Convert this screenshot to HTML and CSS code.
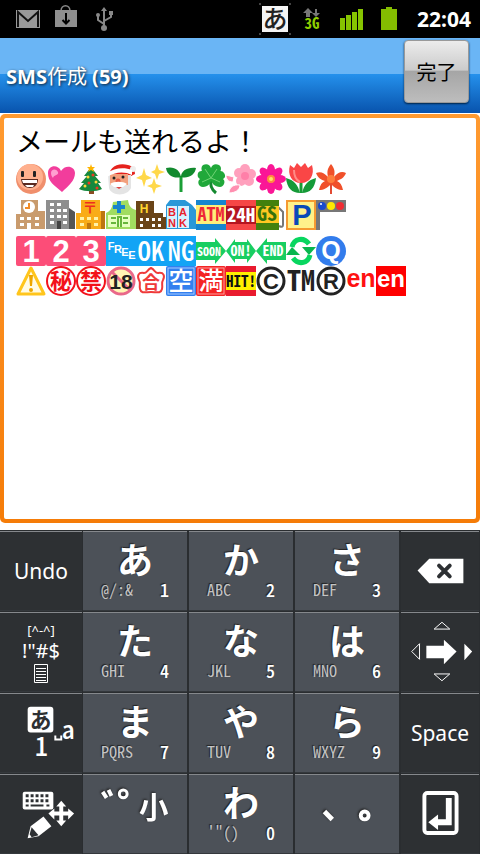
FILE: index.html
```html
<!DOCTYPE html>
<html lang="ja">
<head>
  <meta charset="UTF-8">
  <meta name="viewport" content="width=device-width, initial-scale=1.0">
  <title>SMS作成</title>
  <link rel="stylesheet" href="styles.css">
</head>
<body>

<div class="statusbar">
  <div class="status-icons">
    <svg class="slot" viewBox="0 0 38 38"><rect x="7" y="10" width="24" height="18" fill="#999"/><path d="M9 27V12l10 9 10-9v15" fill="none" stroke="#111" stroke-width="2"/></svg>
    <svg class="slot" viewBox="0 0 38 38"><path d="M14 11c0-7 9-7 9 0" fill="none" stroke="#888" stroke-width="1.5"/><rect x="8" y="10" width="22" height="17" fill="#8f8f8f"/><path d="M19 13v9M15.500 20l3.500 3.500 3.500-3.500" fill="none" stroke="#000" stroke-width="2"/></svg>
    <svg class="slot" viewBox="0 0 38 38"><path d="M19 27V9M19 24l-6-4v-4M19 21l7-4v-4" fill="none" stroke="#888" stroke-width="2"/><path d="M16 11l3-4 3 4z" fill="#888"/><circle cx="19" cy="28" r="3" fill="#888"/><circle cx="13" cy="15" r="2" fill="#888"/><rect x="24" y="11" width="4" height="4" fill="#888"/></svg>
  </div>
  <div class="status-icons">
    <svg class="slot" viewBox="0 0 38 38"><path d="M3 3h2v2H3zM33 3h2v2h-2zM3 33h2v2H3zM33 33h2v2h-2z" fill="#444"/><rect x="6" y="6" width="26" height="26" fill="#f4f4f4"/><text class="cjk medium" x="19" y="28" font-size="25" fill="#222">あ</text></svg>
    <svg class="slot" viewBox="0 0 38 38"><path d="M14 8l5 5h-3v4h-4v-4H9zM22 17l-4-4h3V9h2v4h3z" fill="#777"/><text class="half" x="18" y="29" font-size="15" fill="#8fcf00">3G</text></svg>
    <svg class="slot" viewBox="0 0 38 38"><path d="M8 18h5v12H8zM14 15h5v15h-5zM20 12h5v18h-5zM26 9h5v21h-5z" fill="#86c400"/></svg>
    <svg class="slot" viewBox="0 0 38 38"><path d="M11 9h5V7h6v2h5v21H11z" fill="#84bd00"/></svg>
    <span class="clock">22:04</span>
  </div>
</div>

<header class="titlebar">
  <h1>SMS<span>作成</span> (59)</h1>
  <button class="done" type="button">完了</button>
</header>

<main class="compose">
  <div class="message" contenteditable="true" role="textbox" aria-multiline="true" aria-label="本文" spellcheck="false">
    <p class="line">メールも送れるよ！</p>
    <div class="emoji-row">
      <svg viewBox="0 0 30 30"><circle cx="15" cy="15" r="15" fill="#f08f6c"/><circle cx="14" cy="13" r="13" fill="#ffb08e"/><rect x="5" y="7" width="3" height="6" rx="1" fill="#222"/><rect x="17" y="7" width="3" height="6" rx="1" fill="#222"/><path d="M5 15h17c0 12-16 12-17 0z" fill="#5a2a20"/><path d="M6 16h15v3H7z" fill="#fff"/><path d="M9 21h9l-1 2h-6z" fill="#fff"/></svg>
      <svg viewBox="0 0 30 30"><path d="M16 28C8 21 2 18 2 9c0-8 10-9 13-2 4-7 14-5 14 2 0 8-7 13-13 19z" fill="#f23d9c"/><path d="M5 9c0-4 5-5 7-1 1 4-4 2-5 6-1-1-2-3-2-5z" fill="#ff9fd0"/></svg>
      <svg viewBox="0 0 30 30"><path d="M13 25h5v5h-5z" fill="#8a4b22"/><path d="M15 3l7 9h-3l6 7h-3l4 6c-6 3-17 3-23 0l5-6H5l6-7H8z" fill="#15883d"/><path d="M15 0l1 3h3l-2 2 1 3-3-2-3 2 1-3-2-2h3z" fill="#ffb400"/><g fill="#ffd83a"><circle cx="12" cy="13" r="1.500"/><circle cx="20" cy="18" r="1.500"/><circle cx="9" cy="22" r="1.500"/></g><g fill="#ee3824"><circle cx="17" cy="11" r="1.500"/><circle cx="13" cy="19" r="1.500"/><circle cx="21" cy="24" r="1.500"/></g></svg>
      <svg viewBox="0 0 30 30"><path d="M3 14C2 5 10-2 22 1c5 1 7 5 7 9l-4 2z" fill="#e5221d"/><circle cx="27" cy="5" r="3" fill="#eee"/><path d="M2 11h23v13c-4 9-20 8-22 0z" fill="#e4e4e4"/><path d="M4 10h18v11H4z" fill="#f2a07d"/><path d="M1 9c7-5 17-6 25-3v5c-8-4-17-3-25 2z" fill="#fff"/><circle cx="8" cy="14" r="1.500" fill="#222"/><circle cx="17" cy="13" r="1.500" fill="#222"/><circle cx="12" cy="17" r="2.500" fill="#e65b45"/><path d="M4 20c4-3 13-3 17 0l-4 3H8z" fill="#fff"/><path d="M10 23h6l-3 2z" fill="#d44"/></svg>
      <svg viewBox="0 0 30 30" fill="#ffd84a"><path d="M8 4l2 7 6 3-6 2-2 7-2-7-6-2 6-3zM21 0l2 6 6 2-6 2-2 6-2-6-4-2 4-2zM18 14l2 6 6 2-6 2-2 6-2-6-5-2 5-2z"/></svg>
      <svg viewBox="0 0 30 30"><path d="M15 28V12" stroke="#1a9e36" stroke-width="3"/><path d="M15 13C9 15 1 12 0 4c8-2 14 2 15 9zM15 13c0-6 6-10 15-9-1 7-8 11-15 9z" fill="#128a2e"/></svg>
      <svg viewBox="0 0 30 30"><path d="M15 14c-1 7 0 11 5 15" fill="none" stroke="#14892f" stroke-width="3"/><g fill="#20a83a"><path d="M15 15C7 13 3 4 7 1c4-2 7 0 8 3 1-3 4-5 8-3 5 3 0 12-8 14z"/><path d="M14 14c5-7 12-9 14-5 2 3 1 5-1 6 3 2 1 8-3 8-5 0-9-4-10-9z"/><path d="M16 14C10 7 4 5 2 9c-1 3 0 5 2 6-3 2-2 8 3 8 5 0 8-4 9-9z"/></g><path d="M9 5l6 9 6-9M6 18l9-4 9 4" fill="none" stroke="#71d476"/></svg>
      <svg viewBox="0 0 30 30"><g fill="#ffa0bd"><circle cx="19" cy="5" r="5"/><circle cx="25" cy="10" r="5"/><circle cx="23" cy="17" r="5"/><circle cx="15" cy="17" r="5"/><circle cx="13" cy="9" r="5"/><circle cx="19" cy="12" r="5"/></g><path d="M0 11l8 2-1 5c-5 0-7-3-7-7zM3 29c0-6 5-9 11-8 0 5-5 8-11 8z" fill="#ff8fb0" stroke="#fff"/><circle cx="19" cy="12" r="4" fill="#ff7fa8"/></svg>
      <svg viewBox="0 0 30 30"><g fill="#fa1696"><ellipse cx="15" cy="6" rx="4" ry="6"/><ellipse cx="15" cy="24" rx="4" ry="6"/><g transform="rotate(45 15 15)"><ellipse cx="15" cy="6" rx="4" ry="6"/><ellipse cx="15" cy="24" rx="4" ry="6"/><ellipse cx="6" cy="15" rx="6" ry="4"/><ellipse cx="24" cy="15" rx="6" ry="4"/></g><ellipse cx="6" cy="15" rx="6" ry="4"/><ellipse cx="24" cy="15" rx="6" ry="4"/></g><circle cx="15" cy="15" r="4" fill="#ff8a3c"/><circle cx="15" cy="15" r="2" fill="#ffe36a"/></svg>
      <svg viewBox="0 0 30 30"><path d="M15 17v12" stroke="#169c35" stroke-width="3"/><path d="M14 29C6 29 1 24 0 14c8 2 12 7 14 15zM16 29c8 0 13-5 14-15-8 2-12 7-14 15z" fill="#159a38"/><path d="M4 1l4 3 3-5 4 4 4-4 3 5 4-3c3 10-2 18-11 18S1 11 4 1z" fill="#fa4646"/><path d="M8 6c0 6 2 10 6 12" fill="none" stroke="#ff8c86" stroke-width="2"/></svg>
      <svg viewBox="0 0 30 30"><path d="M15 20v10" stroke="#e24b34" stroke-width="2"/><path d="M15 0c4 5 4 8 3 13 4-5 8-6 12-4-2 5-5 6-9 8 3 1 5 4 6 9-5 0-8-2-12-6-4 4-7 6-12 6 1-5 3-8 6-9-4-1-7-3-9-8 5-2 8 0 12 4-1-5-1-8 3-13z" fill="#f0502a"/><circle cx="15" cy="15" r="4" fill="#ff7d3c"/></svg>
    </div>
    <div class="emoji-row">
      <svg viewBox="0 0 30 30"><path d="M0 14h5V0h17v11h7v18H0z" fill="#c99b6d"/><circle cx="13" cy="7" r="6" fill="#fff"/><path d="M13 3v5H9" fill="none" stroke="#f28c28" stroke-width="2"/><path d="M4 17h4v3H4zM11 17h4v3h-4zM19 17h4v3h-4zM4 23h4v3H4zM11 23h4v6h-4zM19 23h4v3h-4z" fill="#fff"/></svg>
      <svg viewBox="0 0 30 30"><path d="M0 0h23v29H0z" fill="#8e8e8e"/><path d="M23 8l6 4v17h-6z" fill="#555"/><path d="M4 3h4v3H4zM11 3h4v3h-4zM4 9h4v3H4zM11 9h4v3h-4zM17 9h4v3h-4zM4 15h4v3H4zM11 15h4v3h-4zM17 15h4v3h-4zM4 21h4v3H4zM17 21h4v3h-4z" fill="#fff"/><path d="M11 21h4v8h-4z" fill="#444"/></svg>
      <svg viewBox="0 0 30 30"><path d="M0 13h5V0h19v11h5v18H0z" fill="#f9ac18"/><text class="cjk bold" x="14" y="13" font-size="15" fill="#ef2c20">〒</text><path d="M4 17h4v3H4zM11 17h4v3h-4zM18 17h4v3h-4zM4 23h4v3H4zM18 23h4v3h-4z" fill="#fff2a8"/><path d="M11 23h4v6h-4zM25 11h4v18h-4z" fill="#bd7610"/></svg>
      <svg viewBox="0 0 30 30"><path d="M0 13c4-2 6-4 7-11l15-2c1 7 4 9 8 10v19H0z" fill="#a1dc60"/><path d="M2 15h22v12H2z" fill="#e6ffc0"/><path d="M13 1v12M7 7h12" stroke="#1884cc" stroke-width="4"/><path d="M5 18h5M17 18h5M5 23h5M17 23h5M12 27V17h3v10" fill="none" stroke="#67b63c" stroke-width="2"/></svg>
      <svg viewBox="0 0 30 30"><path d="M0 1h18v12h9v4h3v12H0z" fill="#6a4417"/><text class="latin" x="8" y="13" font-size="12" fill="#ffd52e">H</text><path d="M4 18h3v3H4zM10 18h3v3h-3zM16 18h3v3h-3zM22 18h3v3h-3zM4 24h3v3H4zM16 24h3v3h-3zM22 24h3v3h-3z" fill="#fff"/></svg>
      <svg viewBox="0 0 30 30"><path d="M0 5l4-5h15l7 5 4 5v19H0z" fill="#2998d8"/><path d="M1 6h10v22H1zM12 6h11v22H12z" fill="#d4f2ff"/><g class="latin" font-size="11" fill="#e91f2b"><text x="6" y="16">B</text><text x="17" y="16">A</text><text x="6" y="27">N</text><text x="17" y="27">K</text></g></svg>
      <svg viewBox="0 0 30 30"><path d="M0 0h30v30H0z" fill="#1685cf"/><path d="M0 5h30v19H0z" fill="#ffee7a"/><text class="half" x="15" y="21" font-size="18" fill="#ee2637">ATM</text></svg>
      <svg viewBox="0 0 30 30"><path d="M0 0h30v30H0z" fill="#f54646"/><path d="M0 6h30v18H0z" fill="#b51520"/><text class="half" x="15" y="22" font-size="19" fill="#fff">24H</text></svg>
      <svg viewBox="0 0 30 30"><path d="M22 7l5 5v13q0 3-4 1" fill="none" stroke="#777" stroke-width="2"/><path d="M0 0h23v30H0z" fill="#43810d"/><path d="M0 6h23v17H0z" fill="#ffc822"/><text class="half" x="11" y="21" font-size="20" fill="#37720a">GS</text></svg>
      <svg viewBox="0 0 30 30"><rect x="1" y="1" width="28" height="28" fill="#fff18a" stroke="#f59a31" stroke-width="2"/><text class="latin" x="16" y="25" font-size="29" fill="#0a49b8">P</text></svg>
      <svg viewBox="0 0 30 30"><path d="M0 0h30v12H4v18H0z" fill="#777"/><circle cx="6" cy="6" r="4" fill="#194bce"/><circle cx="15" cy="6" r="4" fill="#ffe900"/><circle cx="24" cy="6" r="4" fill="#f12c32"/><circle cx="5" cy="4" r="1" fill="#fff"/></svg>
    </div>
    <div class="emoji-row">
      <svg viewBox="0 0 30 30"><rect width="30" height="30" rx="2" fill="#fc4d78"/><text class="latin" x="15" y="26" font-size="31" fill="#fff">1</text></svg>
      <svg viewBox="0 0 30 30"><rect width="30" height="30" rx="2" fill="#fc4d78"/><text class="latin" x="15" y="26" font-size="31" fill="#fff">2</text></svg>
      <svg viewBox="0 0 30 30"><rect width="30" height="30" rx="2" fill="#fc4d78"/><text class="latin" x="15" y="26" font-size="31" fill="#fff">3</text></svg>
      <svg viewBox="0 0 30 30"><path d="M0 0h30v30H0z" fill="#13a4f5"/><g class="latin" font-size="11" fill="#fff"><text x="5" y="14">F</text><text x="12" y="17">R</text><text x="19" y="20">E</text><text x="26" y="23">E</text></g></svg>
      <svg viewBox="0 0 30 30"><path d="M0 0h30v30H0z" fill="#13a4f5"/><text class="half medium" x="15" y="25" font-size="27" fill="#fff">OK</text></svg>
      <svg viewBox="0 0 30 30"><path d="M0 0h30v30H0z" fill="#13a4f5"/><text class="half medium" x="15" y="25" font-size="27" fill="#fff">NG</text></svg>
      <svg viewBox="0 0 30 30"><path d="M0 6h19V2l11 13-11 13v-4H0z" fill="#18ce62"/><text class="half" x="13" y="20" font-size="12" fill="#fff">SOON</text></svg>
      <svg viewBox="0 0 30 30"><path d="M0 15L9 3v3h12V3l9 12-9 12v-4H9v4z" fill="#18ce62"/><text class="half" x="15" y="20" font-size="14" fill="#fff">ON!</text></svg>
      <svg viewBox="0 0 30 30"><path d="M30 6H11V2L0 15l11 13v-4h19z" fill="#18ce62"/><text class="half" x="17" y="20" font-size="14" fill="#fff">END</text></svg>
      <svg viewBox="0 0 30 30"><path d="M6 11C8 2 18 1 23 8M24 19C22 28 12 29 7 22" fill="none" stroke="#08d65f" stroke-width="5"/><path d="M16 11h14l-7 8zM0 19h14l-8-8z" fill="#08b64e"/></svg>
      <svg viewBox="0 0 30 30"><circle cx="15" cy="15" r="15" fill="#327cec"/><text class="latin" x="15" y="23" font-size="25" fill="#fff">Q</text></svg>
    </div>
    <div class="emoji-row tight">
      <svg viewBox="0 0 30 30"><path d="M15 2l13 26H2z" fill="#fffbe5" stroke="#ffc51c" stroke-width="3" stroke-linejoin="round"/><path d="M13 9h4l-1 11h-2z" fill="#eda600"/><circle cx="15" cy="24" r="2" fill="#eda600"/></svg>
      <svg viewBox="0 0 30 30"><circle cx="15" cy="15" r="14" fill="#fff" stroke="#f3121b" stroke-width="2"/><text class="cjk bold" x="15" y="23" font-size="22" fill="#f3121b">秘</text></svg>
      <svg viewBox="0 0 30 30"><circle cx="15" cy="15" r="14" fill="#fff" stroke="#f3121b" stroke-width="2"/><text class="cjk bold" x="15" y="23" font-size="22" fill="#f3121b">禁</text></svg>
      <svg viewBox="0 0 30 30"><circle cx="15" cy="15" r="13" fill="#fff5b5"/><path d="M5 5l20 20" stroke="#e96889" stroke-width="3"/><circle cx="15" cy="15" r="13" fill="none" stroke="#e96889" stroke-width="3"/><text class="latin" x="15" y="23" font-size="21" fill="#222">18</text></svg>
      <svg viewBox="0 0 30 30"><path d="M15 2c4 2 4 5 7 5 6-1 7 3 5 7-2 3 0 5-1 9-1 5-6 3-11 3S5 28 4 23c-1-4 1-6-1-9-2-4-1-8 5-7 3 0 3-3 7-5z" fill="#fff" stroke="#ef3a3a" stroke-width="2"/><text class="cjk bold" x="15" y="23" font-size="18" fill="#ef3a3a">合</text></svg>
      <svg viewBox="0 0 30 30"><rect width="30" height="30" rx="2" fill="#3380ef"/><rect x="2" y="2" width="26" height="26" fill="none" stroke="#a7cbff"/><text class="cjk medium" x="15" y="24" font-size="25" fill="#fff">空</text></svg>
      <svg viewBox="0 0 30 30"><rect width="30" height="30" rx="2" fill="#f42424"/><rect x="2" y="2" width="26" height="26" fill="none" stroke="#ff9c9c"/><text class="cjk medium" x="15" y="24" font-size="25" fill="#fff">満</text></svg>
      <svg viewBox="0 0 30 30"><path d="M0 0h30v30H0z" fill="#e91b2f"/><path d="M0 6h30v18H0z" fill="#fff000"/><text class="half" x="15" y="21" font-size="15" fill="#111">HIT!</text></svg>
      <svg viewBox="0 0 30 30"><circle cx="15" cy="15" r="13" fill="none" stroke="#222" stroke-width="3"/><text class="latin" x="15" y="23" font-size="22" fill="#222">C</text></svg>
      <svg viewBox="0 0 30 30"><text class="half" x="15" y="25" font-size="28" fill="#222">TM</text></svg>
      <svg viewBox="0 0 30 30"><circle cx="15" cy="15" r="13" fill="none" stroke="#222" stroke-width="3"/><text class="latin" x="15" y="23" font-size="22" fill="#222">R</text></svg>
      <svg viewBox="0 0 30 30"><text class="latin" x="15" y="21" font-size="25" fill="#f11">en</text></svg>
      <svg viewBox="0 0 30 30"><path d="M0 0h30v30H0z" fill="#f00"/><text class="latin" x="15" y="21" font-size="24" fill="#fff">en</text></svg>
    </div>
  </div>
</main>

<div class="keyboard">
  <button class="key side" type="button"><span class="word">Undo</span></button>
  <button class="key" type="button"><span class="kana">あ</span><span class="sub"><span>@/:&amp;</span><b>1</b></span></button>
  <button class="key" type="button"><span class="kana">か</span><span class="sub"><span>ABC</span><b>2</b></span></button>
  <button class="key" type="button"><span class="kana">さ</span><span class="sub"><span>DEF</span><b>3</b></span></button>
  <button class="key side" type="button" aria-label="削除">
    <svg class="art" viewBox="0 0 80 81"><path d="M17 40l12-12h35v25H29z" fill="#fff"/><path d="M39 35l11 11M50 35L39 46" stroke="#2d3033" stroke-width="4" stroke-linecap="round"/></svg>
  </button>

  <button class="key side symbols" type="button">
    <span class="face">[^-^]</span><span class="marks">!"#$</span>
    <svg class="list" viewBox="0 0 14 19" fill="none" stroke="#fff"><path d="M.5.5h13v18H.5zM2 4.500h10M2 7.500h10M2 10.500h10M2 13.500h10M2 16.500h10"/></svg>
  </button>
  <button class="key" type="button"><span class="kana">た</span><span class="sub"><span>GHI</span><b>4</b></span></button>
  <button class="key" type="button"><span class="kana">な</span><span class="sub"><span>JKL</span><b>5</b></span></button>
  <button class="key" type="button"><span class="kana">は</span><span class="sub"><span>MNO</span><b>6</b></span></button>
  <button class="key side" type="button" aria-label="カーソル移動">
    <svg class="art" viewBox="0 0 80 81"><path d="M34 17l8-7 8 7zM34 63l8 7 8-7zM19 32v16l-8-8z" fill="none" stroke="#fff"/><path d="M26 34h18v-6l13 12-13 13v-6H26zM65 32l8 8-8 9z" fill="#fff"/></svg>
  </button>

  <button class="key side" type="button" aria-label="文字種切替">
    <svg class="art" viewBox="0 0 83 81" fill="#fff"><rect x="28" y="14" width="26" height="26" rx="3"/><text class="cjk bold" x="41" y="35" font-size="22" fill="#2d3033">あ</text><path d="M56 43v4h6v-4" fill="none" stroke="#fff" stroke-width="2"/><text class="half medium" x="69" y="47" font-size="26">a</text><text class="half medium" x="42" y="64" font-size="26">1</text></svg>
  </button>
  <button class="key" type="button"><span class="kana">ま</span><span class="sub"><span>PQRS</span><b>7</b></span></button>
  <button class="key" type="button"><span class="kana">や</span><span class="sub"><span>TUV</span><b>8</b></span></button>
  <button class="key" type="button"><span class="kana">ら</span><span class="sub"><span>WXYZ</span><b>9</b></span></button>
  <button class="key side" type="button"><span class="word">Space</span></button>

  <button class="key side" type="button" aria-label="キーボード切替">
    <svg class="art" viewBox="0 0 83 81" fill="#fff"><rect x="23" y="18" width="31" height="18" rx="2"/><path d="M26 22h25M26 27h25" stroke="#2d3033" stroke-width="3" stroke-dasharray="3 2"/><path d="M26 32h3M31 32h13M47 32h3" stroke="#2d3033" stroke-width="2"/><path d="M28 65l3-12 13-10 8 10-13 10z"/><path d="M32 54l7 8-7 2-2-3z" fill="#2d3033"/><path d="M62 27l5 6h-3v5h5v-3l6 5-6 6v-4h-5v5h3l-5 6-5-6h3v-5h-5v4l-6-6 6-5v3h5v-5h-3z"/></svg>
  </button>
  <button class="key" type="button" aria-label="濁点 半濁点">
    <svg class="art" viewBox="0 0 106 81"><g class="raised"><path d="M20 18l4 6M26 16l3 6" stroke="#fff" stroke-width="4"/><circle cx="41" cy="20" r="4" fill="none" stroke="#fff" stroke-width="3"/><text class="cjk bold" x="72" y="45" font-size="30">小</text></g></svg>
  </button>
  <button class="key" type="button"><span class="kana">わ</span><span class="sub"><span>'"()</span><b>0</b></span></button>
  <button class="key" type="button" aria-label="句読点">
    <svg class="art" viewBox="0 0 106 81"><g class="raised"><path d="M30 38l8 8" stroke="#fff" stroke-width="5"/><circle cx="71" cy="42" r="4" fill="none" stroke="#fff" stroke-width="4"/></g></svg>
  </button>
  <button class="key side" type="button" aria-label="改行">
    <svg class="art" viewBox="0 0 80 81"><rect x="24" y="19" width="33" height="41" rx="3" fill="none" stroke="#fff" stroke-width="4"/><path d="M46 24h6v28H38v5l-10-8 10-8v5h8z" fill="#fff"/></svg>
  </button>
</div>

</body>
</html>
```
FILE: styles.css
```css
* {
  box-sizing: border-box;
}

body {
  margin: 0;
  min-height: 100vh;
  display: flex;
  flex-direction: column;
  background: #fff;
  font-family: "Noto Sans", "Noto Sans CJK JP", sans-serif;
}

/* status bar */
.statusbar {
  display: flex;
  justify-content: space-between;
  height: 38px;
  padding: 0 9px;
  background: #000;
}

.status-icons {
  display: flex;
  align-items: center;
}

.slot {
  width: 38px;
  height: 38px;
}

.clock {
  margin-left: 9px;
  color: #fff;
  font-size: 21px;
  font-weight: bold;
}

/* title */
.titlebar {
  display: flex;
  justify-content: space-between;
  align-items: center;
  height: 75px;
  padding: 0 11px 0 6px;
  background: linear-gradient(#6ab5f5 0, #6ab5f5 36px, #2591ec 36px, #0853ad 100%);
}

.titlebar h1 {
  margin: 0;
  color: #fff;
  font-size: 20px;
  text-shadow: 1px 1px 3px #123;
}

.titlebar h1 span {
  font-weight: normal;
}

.done {
  align-self: flex-start;
  width: 65px;
  height: 63px;
  margin-top: 2px;
  padding: 0;
  border: 1px solid #999;
  border-radius: 4px;
  background: linear-gradient(#ececec, #cbcbcb 48%, #a5a5a5 49%, #bdbdbd);
  box-shadow: 0 1px 2px #024;
  color: #000;
  font-family: inherit;
  font-size: 20px;
}

/* message */
.compose {
  flex: 1;
  display: flex;
  margin: 1px 0 7px;
  padding: 4px;
  border-radius: 5px;
  background: linear-gradient(#ff9a30, #f57c08);
}

.message {
  flex: 1;
  padding: 6px 12px;
  border-radius: 2px;
  background: #fff;
  outline: none;
}

.line {
  margin: 0;
  color: #000;
  font-size: 27px;
  line-height: 36px;
}

.emoji-row {
  display: flex;
  height: 30px;
  margin-top: 6px;
}

.line + .emoji-row {
  margin-top: 4px;
}

.emoji-row.tight {
  margin-top: 0;
}

.emoji-row svg {
  width: 30px;
  height: 30px;
}

svg {
  overflow: visible;
}

svg text {
  text-anchor: middle;
}

.latin {
  font-family: "Liberation Sans", sans-serif;
  font-weight: bold;
}

.cjk {
  font-family: "Noto Sans CJK JP", sans-serif;
}

/* half-width latin */
.half {
  font-family: "Noto Sans CJK JP", sans-serif;
  font-feature-settings: "hwid";
  font-weight: bold;
}

.cjk.bold {
  font-weight: bold;
}

.medium {
  font-weight: 500;
}

/* keyboard */
.keyboard {
  display: grid;
  grid-template-columns: 83fr 106fr 106fr 106fr 79fr;
  grid-auto-rows: 81px;
}

.key {
  display: flex;
  flex-direction: column;
  align-items: center;
  min-width: 0;
  padding: 9px 0 0;
  border: 0;
  border-right: 2px solid #2a2d30;
  border-top: 1px solid #2a2d30;
  background: #4c5158;
  box-shadow: inset 0 1px #85888c, inset 0 -1px #34383c;
  color: #fff;
  font-family: "Noto Sans", "Noto Sans CJK JP", sans-serif;
}

.key.side {
  justify-content: center;
  padding: 0;
  border-right-width: 1px;
  background: #2d3033;
}

.kana {
  font-family: "Noto Sans CJK JP", sans-serif;
  font-size: 36px;
  font-weight: bold;
  line-height: 36px;
  text-shadow: -1px -1px 1px #222;
}

.sub {
  display: flex;
  justify-content: space-between;
  align-self: stretch;
  margin-top: 4px;
  padding: 0 18px;
  color: #c4c4c4;
  font-family: "Noto Sans CJK JP", sans-serif;
  font-feature-settings: "hwid";
  font-size: 16px;
  line-height: 18px;
  text-shadow: -1px -1px 1px #222;
}

.sub b {
  color: #fff;
  font-size: 18px;
  font-weight: 500;
}

.word {
  font-size: 21px;
}

.face {
  font-size: 13px;
  line-height: 16px;
}

.marks {
  font-size: 20px;
  line-height: 26px;
}

.list {
  width: 14px;
  height: 19px;
}

.art {
  width: 100%;
  height: 81px;
}

.key:not(.side) .art {
  margin-top: -9px;
}

.raised {
  fill: #fff;
  filter: drop-shadow(-1px -1px 1px #222);
}
```
